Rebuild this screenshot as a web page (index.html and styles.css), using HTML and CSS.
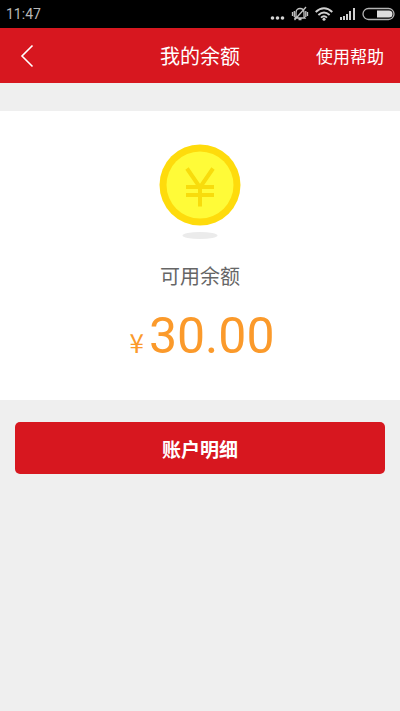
FILE: index.html
```html
<!DOCTYPE html>
<html lang="zh-CN">
<head>
<meta charset="utf-8">
<meta name="viewport" content="width=device-width, initial-scale=1">
<title>我的余额</title>
<link rel="stylesheet" href="styles.css">
</head>
<body>
<div class="status">
  <time class="status-time">11:47</time>
  <div class="status-icons">
    <svg width="16" height="20" viewBox="0 0 16 20" fill="#d4d4d4"><circle cx="2.500" cy="14" r="1.800"/><circle cx="7.500" cy="14" r="1.800"/><circle cx="12.500" cy="14" r="1.800"/></svg>
    <svg width="18" height="20" viewBox="0 0 18 20" fill="none" stroke="#c4c4c4" stroke-width="1.300"><path d="M5 12.500V8.500C5 5.500 7 4.500 9 4.500s4 1 4 4v4l1 1.500H4zM7.500 15.500h3M15 3 3.500 16M1.500 8v4M3.300 7v6M16.500 8v4M14.800 7v6"/></svg>
    <svg width="20" height="20" viewBox="0 0 20 20" fill="none" stroke="#d0d0d0" stroke-width="1.900"><path d="M1.700 8Q10 0.500 18.300 8M4.400 11Q10 6 15.600 11M7 13.600Q10 11 13 13.600"/><circle cx="10" cy="15.200" r="1.500" fill="#d0d0d0" stroke="none"/></svg>
    <svg width="18" height="20" viewBox="0 0 18 20" fill="#cfcfcf"><path d="M1 13h2v3H1zM4 12h2v4H4zM7 10h2v6H7zM10 7h2v9h-2zM14 4h2v12h-2z"/></svg>
    <svg width="33" height="20" viewBox="0 0 33 20"><rect x="1" y="4.500" width="31" height="11" rx="5.500" fill="none" stroke="#b4b4b4" stroke-width="1.300"/><path d="M15 6.500h12a3.500 3.500 0 0 1 0 7H15z" fill="#dedede"/></svg>
  </div>
</div>
<header class="bar">
  <button class="back" type="button" aria-label="返回"><svg width="14" height="24" viewBox="0 0 14 24" fill="none" stroke="#fff" stroke-width="1.600"><path d="M12.500 1.500 2 12l10.500 10.500"/></svg></button>
  <h1 class="title">我的余额</h1>
  <a class="help" href="#">使用帮助</a>
</header>
<main>
  <section class="balance">
    <svg class="coin" width="82" height="96" viewBox="0 0 82 96">
      <ellipse cx="41" cy="91.500" rx="17.500" ry="3.500" fill="#ebebeb"/>
      <circle cx="41" cy="41" r="40.500" fill="#fedb0c"/>
      <circle cx="41" cy="41" r="33.500" fill="#fffb38"/>
      <path d="M28 24.500 41 43.500 54 24.500M41 43v19.500M27 43h28M27 51h28" fill="none" stroke="#f8dc0c" stroke-width="4"/>
    </svg>
    <p class="label">可用余额</p>
    <p class="amount"><span class="currency">¥</span><span>30.00</span></p>
  </section>
  <button class="detail" type="button">账户明细</button>
</main>
</body>
</html>
```
FILE: styles.css
```css
* {
  box-sizing: border-box;
}

body {
  margin: 0;
  min-height: 100vh;
  background: #efefef;
  font-family: Roboto, "Noto Sans CJK SC", sans-serif;
}

h1,
p {
  margin: 0;
}

svg {
  display: block;
}

button {
  border: 0;
  padding: 0;
  font-family: inherit;
  cursor: pointer;
}

.status {
  display: flex;
  align-items: center;
  justify-content: space-between;
  height: 28px;
  padding: 0 5px 0 6px;
  background: #000;
}

.status-time {
  color: #b8b8b8;
  font-size: 14px;
}

.status-icons {
  display: flex;
  align-items: center;
  gap: 5px;
}

.bar {
  display: grid;
  grid-template-columns: 1fr auto 1fr;
  align-items: center;
  height: 55px;
  padding: 0 16px;
  background: #d7171f;
  color: #fff;
}

.back {
  justify-self: start;
  padding: 4px;
  background: none;
}

.title {
  font-size: 20px;
  font-weight: 400;
}

.help {
  justify-self: end;
  color: inherit;
  font-size: 17px;
  text-decoration: none;
}

.balance {
  display: flex;
  flex-direction: column;
  align-items: center;
  margin-top: 28px;
  padding: 33px 16px 34px;
  background: #fff;
}

.label {
  margin-top: 20px;
  color: #666;
  font-size: 20px;
  line-height: 34px;
}

.amount {
  display: flex;
  align-items: baseline;
  gap: 5px;
  margin-top: 12px;
  padding-left: 4px;
  color: #fb9a2b;
  font-size: 50px;
  line-height: 60px;
}

.currency {
  font-family: "Noto Sans CJK SC", sans-serif;
  font-size: 26px;
  line-height: 1;
}

.detail {
  display: block;
  width: calc(100% - 30px);
  height: 52px;
  margin: 22px auto;
  border-radius: 5px;
  background: #d7171f;
  color: #fff;
  font-size: 19px;
  font-weight: 700;
}
```
